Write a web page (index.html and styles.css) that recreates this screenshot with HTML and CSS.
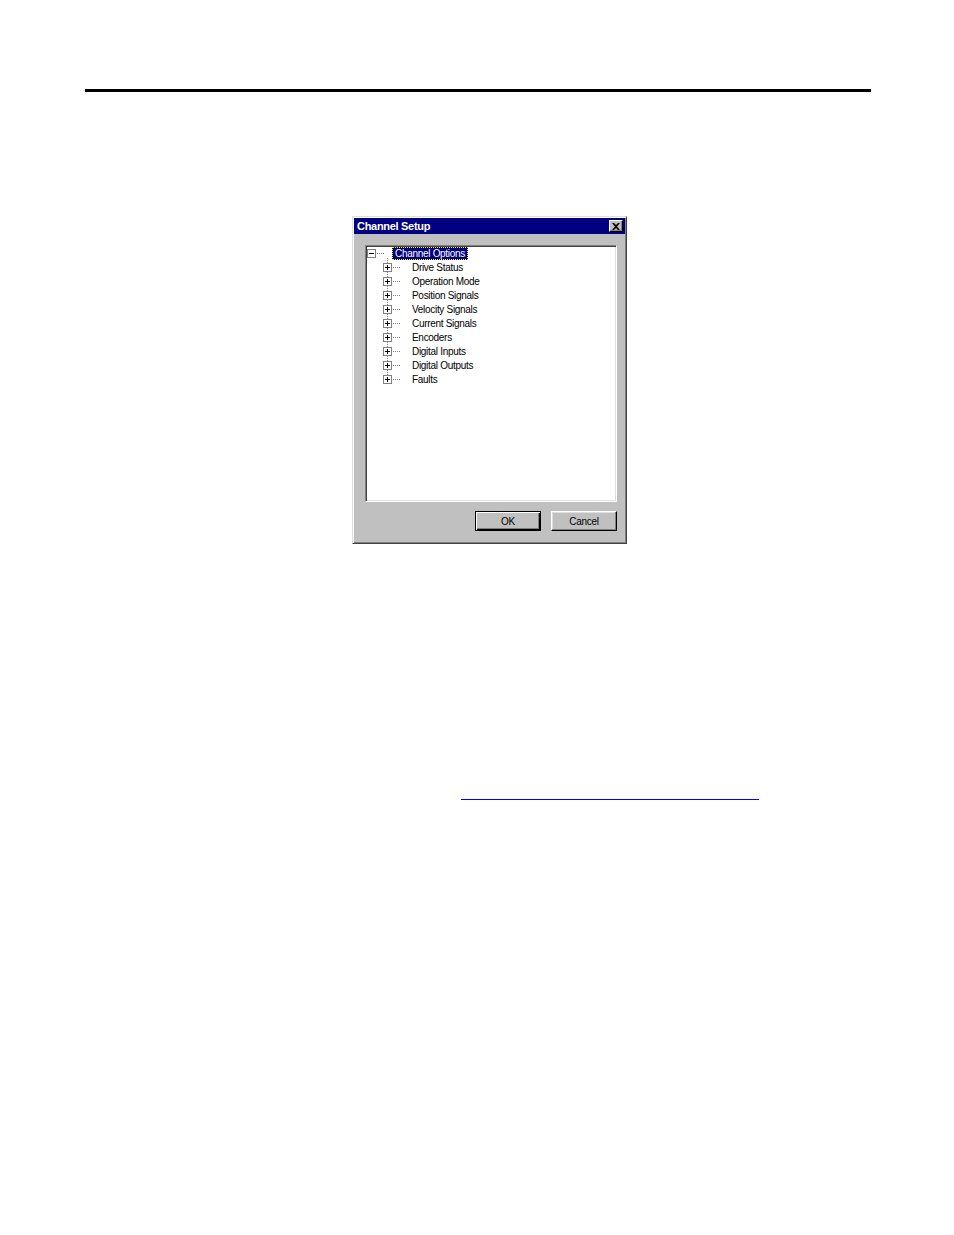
FILE: index.html
```html
<!DOCTYPE html>
<html>
<head>
<meta charset="utf-8">
<link rel="stylesheet" href="styles.css">
</head>
<body>
<div class="page">
  <div class="rule"></div>
  <div class="dialog">
    <div class="titlebar">
      <span class="title">Channel Setup</span>
      <span class="close"><svg width="8" height="7" viewBox="0 0 8 7"><path d="M0 0h2l2 2 2-2h2L5 3.5 8 7H6L4 5 2 7H0l3-3.5z" fill="#000"/></svg></span>
    </div>
    <div class="body">
      <div class="tree">
        <div class="row root">
          <svg class="exp" width="9" height="9" viewBox="0 0 9 9"><rect x=".5" y=".5" width="8" height="8" fill="#fff" stroke="#808080"/><path d="M2 4.5h5" stroke="#000"/></svg>
          <span class="dots"></span>
          <span class="label selected">Channel Options</span>
        </div>
        <div class="children">
          <div class="row child"><svg class="exp" width="9" height="9" viewBox="0 0 9 9"><rect x=".5" y=".5" width="8" height="8" fill="#fff" stroke="#808080"/><path d="M2 4.5h5M4.5 2v5" stroke="#000"/></svg><span class="dots"></span><span class="label">Drive Status</span></div>
          <div class="row child"><svg class="exp" width="9" height="9" viewBox="0 0 9 9"><rect x=".5" y=".5" width="8" height="8" fill="#fff" stroke="#808080"/><path d="M2 4.5h5M4.5 2v5" stroke="#000"/></svg><span class="dots"></span><span class="label">Operation Mode</span></div>
          <div class="row child"><svg class="exp" width="9" height="9" viewBox="0 0 9 9"><rect x=".5" y=".5" width="8" height="8" fill="#fff" stroke="#808080"/><path d="M2 4.5h5M4.5 2v5" stroke="#000"/></svg><span class="dots"></span><span class="label">Position Signals</span></div>
          <div class="row child"><svg class="exp" width="9" height="9" viewBox="0 0 9 9"><rect x=".5" y=".5" width="8" height="8" fill="#fff" stroke="#808080"/><path d="M2 4.5h5M4.5 2v5" stroke="#000"/></svg><span class="dots"></span><span class="label">Velocity Signals</span></div>
          <div class="row child"><svg class="exp" width="9" height="9" viewBox="0 0 9 9"><rect x=".5" y=".5" width="8" height="8" fill="#fff" stroke="#808080"/><path d="M2 4.5h5M4.5 2v5" stroke="#000"/></svg><span class="dots"></span><span class="label">Current Signals</span></div>
          <div class="row child"><svg class="exp" width="9" height="9" viewBox="0 0 9 9"><rect x=".5" y=".5" width="8" height="8" fill="#fff" stroke="#808080"/><path d="M2 4.5h5M4.5 2v5" stroke="#000"/></svg><span class="dots"></span><span class="label">Encoders</span></div>
          <div class="row child"><svg class="exp" width="9" height="9" viewBox="0 0 9 9"><rect x=".5" y=".5" width="8" height="8" fill="#fff" stroke="#808080"/><path d="M2 4.5h5M4.5 2v5" stroke="#000"/></svg><span class="dots"></span><span class="label">Digital Inputs</span></div>
          <div class="row child"><svg class="exp" width="9" height="9" viewBox="0 0 9 9"><rect x=".5" y=".5" width="8" height="8" fill="#fff" stroke="#808080"/><path d="M2 4.5h5M4.5 2v5" stroke="#000"/></svg><span class="dots"></span><span class="label">Digital Outputs</span></div>
          <div class="row child"><svg class="exp" width="9" height="9" viewBox="0 0 9 9"><rect x=".5" y=".5" width="8" height="8" fill="#fff" stroke="#808080"/><path d="M2 4.5h5M4.5 2v5" stroke="#000"/></svg><span class="dots"></span><span class="label">Faults</span></div>
        </div>
      </div>
      <div class="buttons">
        <button class="btn default">OK</button>
        <button class="btn">Cancel</button>
      </div>
    </div>
  </div>
  <div class="link-line"></div>
</div>
</body>
</html>
```

FILE: styles.css
```css
html, body {
  margin: 0;
  padding: 0;
  background: #fff;
}

.page {
  padding-top: 89px;
  font-family: "Liberation Sans", Arial, sans-serif;
}

.rule {
  margin-left: 85px;
  width: 786px;
  height: 3px;
  background: #000;
}

.dialog {
  margin-left: 352px;
  margin-top: 124px;
  width: 275px;
  box-sizing: border-box;
  background: #c0c0c0;
  border: 1px solid;
  border-color: #dfdfdf #404040 #404040 #dfdfdf;
  box-shadow: inset 1px 1px #fff, inset -1px -1px #808080;
  padding: 1px;
}

.titlebar {
  height: 16px;
  background: #000080;
  display: flex;
  align-items: center;
  justify-content: space-between;
  padding: 0 2px 0 3px;
}

.title {
  color: #fff;
  font-weight: bold;
  font-size: 11px;
  letter-spacing: -0.3px;
  line-height: 16px;
}

.close {
  width: 14px;
  height: 12px;
  box-sizing: border-box;
  background: #c0c0c0;
  border: 1px solid;
  border-color: #fff #000 #000 #fff;
  box-shadow: inset -1px -1px #808080;
  display: flex;
  align-items: center;
  justify-content: center;
}

.close svg {
  display: block;
}

.body {
  padding: 11px 8px 11px 11px;
}

.tree {
  height: 257px;
  box-sizing: border-box;
  background: #fff;
  border: 1px solid;
  border-color: #808080 #fff #fff #808080;
  box-shadow: inset 1px 1px #404040, inset -1px -1px #dfdfdf;
  padding: 0 1px 1px 1px;
}

.row {
  display: flex;
  align-items: center;
  height: 14px;
  font-size: 10px;
  letter-spacing: -0.3px;
  color: #000;
}

.row.root {
  margin-top: 1px;
  height: 13px;
}

.row.child {
  padding-left: 16px;
}

.exp {
  display: block;
  flex: none;
  position: relative;
  z-index: 1;
}

.dots {
  margin-left: 1px;
  width: 8px;
  height: 1px;
  background-image: linear-gradient(to right, #808080 1px, transparent 1px);
  background-size: 2px 1px;
  flex: none;
}

.label {
  margin-left: 7px;
  padding: 0 2px;
  border: 1px solid transparent;
  line-height: 11px;
  white-space: nowrap;
}

.row.child .label {
  margin-left: 8px;
}

.label.selected {
  background: #000080;
  color: #fff;
  border: 1px dotted #ffff00;
}

.children {
  position: relative;
}

.children::before {
  content: "";
  position: absolute;
  left: 20px;
  top: -2px;
  width: 1px;
  height: 121px;
  background-image: linear-gradient(to bottom, #808080 1px, transparent 1px);
  background-size: 1px 2px;
}

.buttons {
  display: flex;
  justify-content: flex-end;
  gap: 10px;
  margin-top: 9px;
}

.btn {
  width: 66px;
  height: 20px;
  box-sizing: border-box;
  margin: 0;
  padding: 0;
  background: #c0c0c0;
  border: 1px solid;
  border-color: #fff #000 #000 #fff;
  box-shadow: inset -1px -1px #808080, inset 1px 1px #dfdfdf;
  font-family: "Liberation Sans", Arial, sans-serif;
  font-size: 10px;
  letter-spacing: -0.3px;
  color: #000;
}

.btn.default {
  border-color: #000;
  box-shadow: inset 1px 1px #fff, inset -1px -1px #000, inset -2px -2px #808080;
}

.link-line {
  margin-left: 461px;
  margin-top: 255px;
  width: 298px;
  height: 1px;
  background: #0000ff;
}
```
